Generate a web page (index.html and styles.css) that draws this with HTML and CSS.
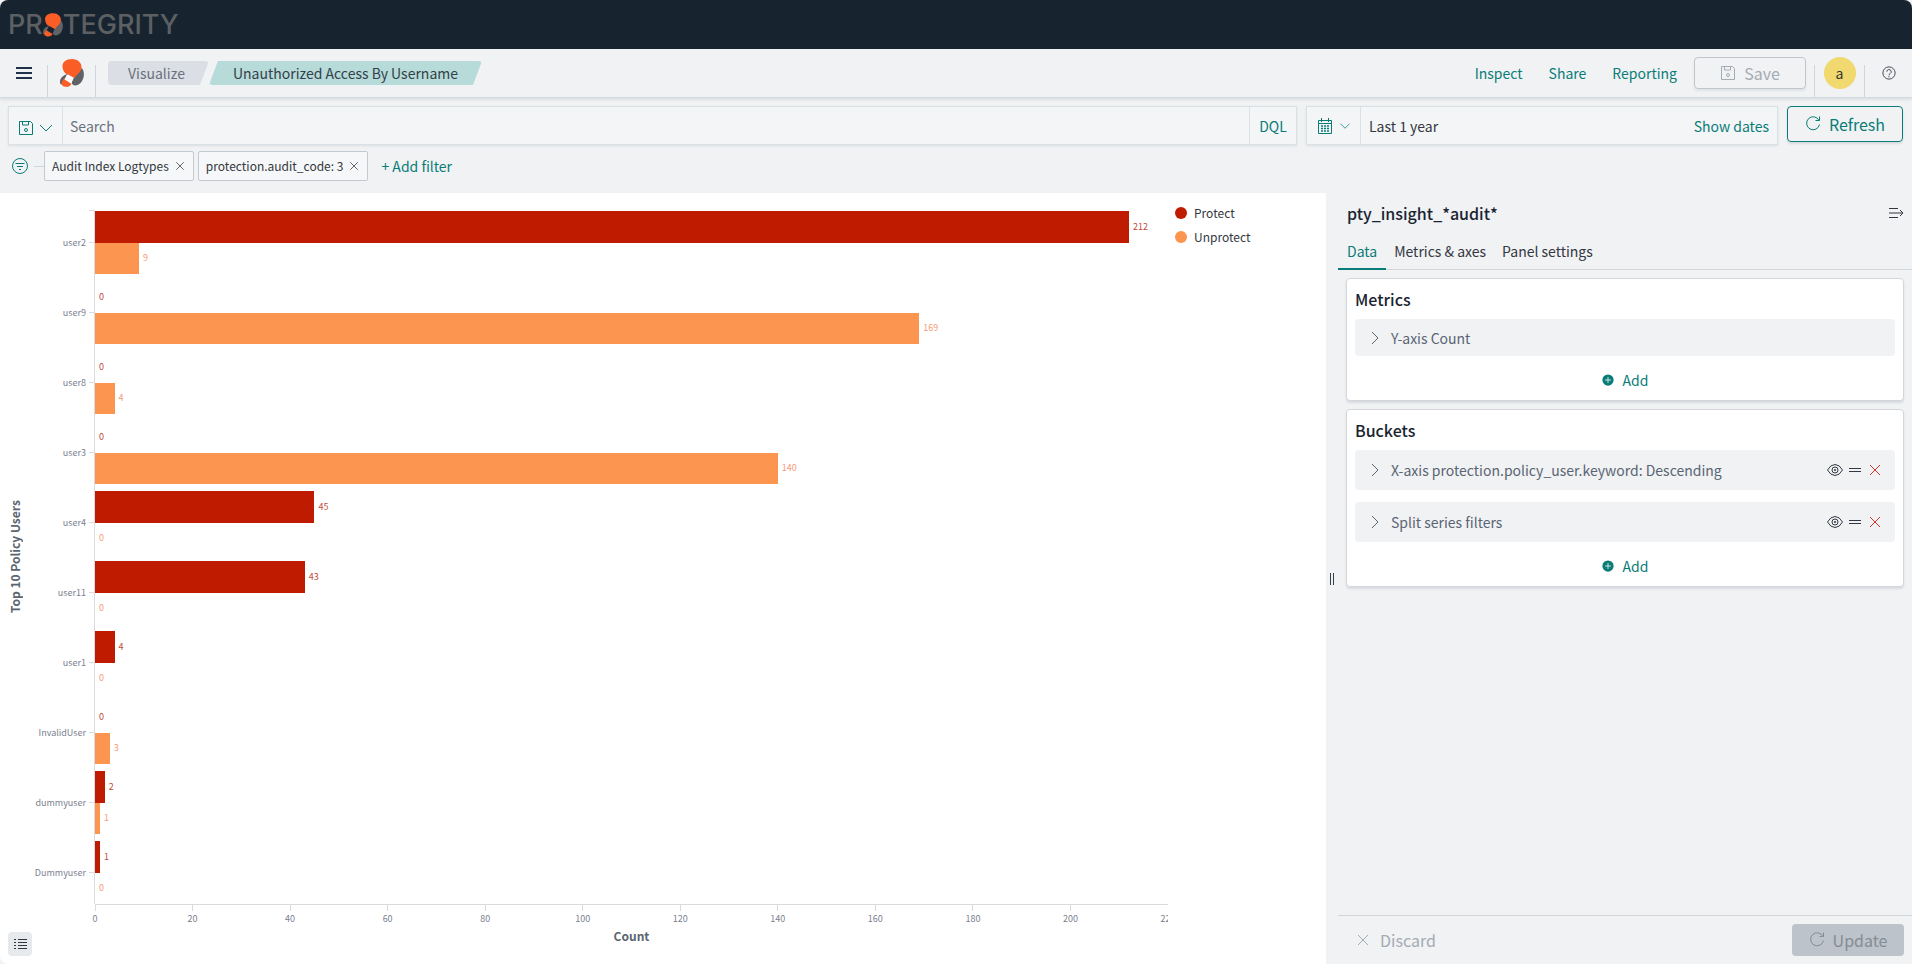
FILE: index.html
```html
<!DOCTYPE html>
<html lang="en">
  <head>
    <meta charset="UTF-8" />
    <meta name="viewport" content="width=device-width, initial-scale=1.0" />
    <title>Unauthorized Access By Username</title>
    <link rel="stylesheet" href="styles.css">
  </head>
  <body>
    <!-- shared icons -->
    <svg class="sprite" aria-hidden="true">
      <symbol id="i-mark" viewBox="0 0 24 28">
        <path class="mark-dark" d="M21.500 9C24.500 11 25 19 21 23.500 18 27 13 27.500 12 24.500 11.500 21 15 17 18 14 20 12 21 11 21.500 9z" />
        <path class="mark-dark" d="M8 15C3 16 0 19 0 23c0 2 1 3 2 2C3 21 6 20 8 15z" />
        <path class="mark-hot" d="M2.500 8C2 3 6 0 12 0s10 4 9.500 9c-.5 4-4.500 6-7 10L8 15.500C5 15 3 12 2.500 8z" />
        <path class="mark-hot" d="M5 19C2 21 -.5 26 4 27.500c3 1 7 0 7.500-3.500z" />
        <path class="mark-gap" d="M7 15.500l6.500 4-2.500 5-6.500-4z" />
      </symbol>
      <symbol id="i-save" viewBox="0 0 16 16">
        <path d="M1.500 1.500h11l2 2v11h-13zM4.500 1.500v3.500h6v-3.500" />
        <circle cx="8" cy="10" r="1.500" />
      </symbol>
      <symbol id="i-down" viewBox="0 0 16 16"><path d="M2 5l6 6 6-6" /></symbol>
      <symbol id="i-right" viewBox="0 0 16 16"><path d="M5 2l6 6-6 6" /></symbol>
      <symbol id="i-x" viewBox="0 0 16 16"><path d="M3 3l10 10M13 3L3 13" /></symbol>
      <symbol id="i-refresh" viewBox="0 0 16 16"><path d="M10.500 4.500h4v-4M14 4.500A6.500 6.500 0 1 0 14.500 8.500" /></symbol>
      <symbol id="i-calendar" viewBox="0 0 16 16">
        <path d="M1.500 2.500h13v13h-13zM1.500 5.500h13M4.500 0v4M11.500 0v4" />
        <path stroke-dasharray="2 1" stroke-width="1.500" d="M4 8h8M4 10.500h8M4 13h8" />
      </symbol>
      <symbol id="i-filter" viewBox="0 0 16 16"><circle cx="8" cy="8" r="7.500" /><path d="M3.500 5.500h9M5 8.500h6M7 11.500h2" /></symbol>
      <symbol id="i-help" viewBox="0 0 16 16"><circle cx="8" cy="8" r="7" /><path d="M5.500 6.500a2.500 2.500 0 1 1 3.700 2.200Q8 9.200 8 10.500M8 11.500v1.500" /></symbol>
      <symbol id="i-plus" viewBox="0 0 16 16"><circle cx="8" cy="8" r="7.500" fill="currentColor" stroke="none" /><path stroke="#fff" d="M8 4v8M4 8h8" /></symbol>
      <symbol id="i-eye" viewBox="0 0 16 16"><path d="M.5 8Q3.500 2.500 8 2.500t7.500 5.500Q12.500 13.500 8 13.500T.5 8z" /><circle cx="8" cy="8" r="3" /><circle cx="8" cy="8" r=".7" /></symbol>
      <symbol id="i-grab" viewBox="0 0 12 12"><path d="M0 4.500h12M0 7.500h12" /></symbol>
      <symbol id="i-collapse" viewBox="0 0 16 16"><path d="M1 3.500h9M1 8h14M1 12.500h9M12 5l3 3-3 3" /></symbol>
      <symbol id="i-list" viewBox="0 0 14 12"><path d="M1 1.500h2M5 1.500h9M1 4.500h2M5 4.500h9M1 7.500h2M5 7.500h9M1 10.500h2M5 10.500h9" /></symbol>
    </svg>

    <header class="brand">
      <a href="#" class="wordmark" aria-label="Protegrity">
        <span>PR</span><svg class="brand-mark"><use href="#i-mark" /></svg><span>TEGRITY</span>
      </a>
    </header>

    <nav class="topnav">
      <button class="hamburger" aria-label="Menu"><i></i><i></i><i></i></button>
      <a href="#" class="home" aria-label="Home"><svg><use href="#i-mark" /></svg></a>
      <div class="crumbs">
        <a href="#" class="crumb">Visualize</a>
        <a href="#" class="crumb crumb-active">Unauthorized Access By Username</a>
      </div>
      <div class="nav-links">
        <a href="#">Inspect</a>
        <a href="#">Share</a>
        <a href="#">Reporting</a>
      </div>
      <button class="btn btn-save" disabled><svg class="icon"><use href="#i-save" /></svg>Save</button>
      <div class="nav-cell avatar-cell"><button class="avatar">a</button></div>
      <div class="nav-cell help-cell"><button class="plain" aria-label="Help"><svg class="icon-help"><use href="#i-help" /></svg></button></div>
    </nav>

    <section class="query">
      <div class="query-row">
        <div class="field search-field">
          <button class="field-btn saved" aria-label="Saved queries">
            <svg class="icon"><use href="#i-save" /></svg>
            <svg class="icon"><use href="#i-down" /></svg>
          </button>
          <input type="text" placeholder="Search" aria-label="Search">
          <button class="field-btn dql">DQL</button>
        </div>
        <div class="field date-field">
          <button class="field-btn when" aria-label="Date quick select">
            <svg class="icon"><use href="#i-calendar" /></svg>
            <svg class="icon-sm"><use href="#i-down" /></svg>
          </button>
          <button class="range">Last 1 year</button>
          <button class="show-dates">Show dates</button>
        </div>
        <button class="btn btn-refresh"><svg class="icon"><use href="#i-refresh" /></svg>Refresh</button>
      </div>
      <div class="filters">
        <button class="plain teal" aria-label="Filter options"><svg class="icon"><use href="#i-filter" /></svg></button>
        <span class="dash"></span>
        <span class="pill">Audit Index Logtypes<button class="plain" aria-label="Remove filter"><svg class="icon-sm"><use href="#i-x" /></svg></button></span>
        <span class="pill">protection.audit_code: 3<button class="plain" aria-label="Remove filter"><svg class="icon-sm"><use href="#i-x" /></svg></button></span>
        <button class="plain add-filter">+ Add filter</button>
      </div>
    </section>

    <main class="workspace">
      <section class="vis">
        <div class="y-title">Top 10 Policy Users</div>
        <div class="chart">
          <div class="rows" id="rows"></div>
          <div class="x-axis" id="x-axis"></div>
          <div class="x-title">Count</div>
        </div>
        <ul class="legend">
          <li><i class="protect"></i>Protect</li>
          <li><i class="unprotect"></i>Unprotect</li>
        </ul>
        <button class="legend-toggle" aria-label="Toggle legend"><svg><use href="#i-list" /></svg></button>
      </section>

      <div class="resizer"><i></i><i></i></div>

      <aside class="editor">
        <div class="editor-head">
          <h2>pty_insight_*audit*</h2>
          <button class="plain" aria-label="Collapse"><svg class="icon"><use href="#i-collapse" /></svg></button>
        </div>
        <div class="tabs">
          <button class="tab tab-active">Data</button>
          <button class="tab">Metrics &amp; axes</button>
          <button class="tab">Panel settings</button>
        </div>
        <div class="cards">
          <section class="card">
            <h3>Metrics</h3>
            <div class="agg agg-single">
              <button class="agg-name"><svg class="icon"><use href="#i-right" /></svg>Y-axis Count</button>
            </div>
            <button class="add"><svg class="icon-sm"><use href="#i-plus" /></svg>Add</button>
          </section>
          <section class="card">
            <h3>Buckets</h3>
            <div class="agg">
              <button class="agg-name"><svg class="icon"><use href="#i-right" /></svg>X-axis protection.policy_user.keyword: Descending</button>
              <button class="plain" aria-label="Disable"><svg class="icon"><use href="#i-eye" /></svg></button>
              <button class="plain" aria-label="Reorder"><svg class="icon-sm"><use href="#i-grab" /></svg></button>
              <button class="plain danger" aria-label="Remove"><svg class="icon"><use href="#i-x" /></svg></button>
            </div>
            <div class="agg">
              <button class="agg-name"><svg class="icon"><use href="#i-right" /></svg>Split series filters</button>
              <button class="plain" aria-label="Disable"><svg class="icon"><use href="#i-eye" /></svg></button>
              <button class="plain" aria-label="Reorder"><svg class="icon-sm"><use href="#i-grab" /></svg></button>
              <button class="plain danger" aria-label="Remove"><svg class="icon"><use href="#i-x" /></svg></button>
            </div>
            <button class="add"><svg class="icon-sm"><use href="#i-plus" /></svg>Add</button>
          </section>
        </div>
        <footer class="editor-foot">
          <button class="discard" disabled><svg class="icon"><use href="#i-x" /></svg>Discard</button>
          <button class="btn btn-update" disabled><svg class="icon"><use href="#i-refresh" /></svg>Update</button>
        </footer>
      </aside>
    </main>

    <script>
      const MAX = 220;
      const data = [
        ["user2", 212, 9],
        ["user9", 0, 169],
        ["user8", 0, 4],
        ["user3", 0, 140],
        ["user4", 45, 0],
        ["user11", 43, 0],
        ["user1", 4, 0],
        ["InvalidUser", 0, 3],
        ["dummyuser", 2, 1],
        ["Dummyuser", 1, 0],
      ];

      function bar(name, value) {
        const width = (value / MAX) * 100;
        return `<div class="bar-line ${name}-line"><div class="bar ${name}" style="width: ${width}%"></div><span>${value}</span></div>`;
      }

      document.getElementById("rows").innerHTML = data
        .map(
          ([user, protect, unprotect]) =>
            `<div class="row"><div class="row-label">${user}</div><div class="bars">${bar("protect", protect)}${bar("unprotect", unprotect)}</div></div>`
        )
        .join("");

      let ticks = "";
      for (let n = 0; n <= MAX; n += 20) {
        ticks += `<span class="x-tick" style="left: ${(n / MAX) * 100}%">${n}</span>`;
      }
      document.getElementById("x-axis").innerHTML = ticks;
    </script>
  </body>
</html>
```
FILE: styles.css
```css
* {
  box-sizing: border-box;
}

body {
  margin: 0;
  min-height: 100vh;
  display: flex;
  flex-direction: column;
  background: #f0f2f4;
  color: #343741;
  font-family: "Noto Sans CJK SC", "Noto Sans", sans-serif;
  font-size: 14px;
  line-height: 24px;
}

button,
input {
  font: inherit;
  color: inherit;
  background: none;
  border: 0;
  padding: 0;
  margin: 0;
}

button {
  display: inline-flex;
  align-items: center;
  white-space: nowrap;
}

a {
  color: #0a7c78;
  text-decoration: none;
}

h2,
h3 {
  margin: 0;
  font-size: 16px;
  font-weight: 500;
  color: #1a2430;
}

svg {
  display: block;
  flex: none;
  fill: none;
  stroke: currentColor;
}

.sprite {
  position: absolute;
  width: 0;
  height: 0;
}

#i-mark {
  stroke: none;
}

.mark-hot {
  fill: #fa5d26;
}

.mark-dark {
  fill: #5f6266;
}

.mark-gap {
  fill: var(--gap, #fff);
}

.icon {
  width: 16px;
  height: 16px;
}

.icon-sm {
  width: 12px;
  height: 12px;
}

.icon-help {
  width: 14px;
  height: 14px;
}

.teal {
  color: #0a7c78;
}

/* brand bar */
.brand {
  height: 49px;
  background: #172430;
  border-radius: 8px 8px 0 0;
  padding: 0 8px;
  display: flex;
  align-items: center;
}

.wordmark {
  display: flex;
  align-items: center;
  color: #5d6063;
  font-family: Inter, sans-serif;
  font-size: 27px;
  font-weight: 500;
}

.brand-mark {
  width: 20px;
  height: 24px;
  --gap: #172430;
}

/* navigation */
.topnav {
  height: 49px;
  display: flex;
  align-items: center;
  border-bottom: 1px solid #d3dae6;
  box-shadow: 0 2px 2px rgba(90, 100, 110, 0.12);
}

.hamburger {
  flex-direction: column;
  justify-content: space-between;
  width: 16px;
  height: 12px;
  margin: 0 15px 0 16px;
}

.hamburger i {
  width: 16px;
  height: 2px;
  background: #1f3247;
}

.home {
  align-self: flex-end;
  height: 32px;
  width: 49px;
  display: flex;
  justify-content: center;
  border: solid #cfd5dc;
  border-width: 0 1px;
}

.home svg {
  width: 24px;
  height: 28px;
  margin-top: -6px;
}

.crumbs {
  display: flex;
  margin-left: 12px;
  flex: 1;
}

.crumb {
  height: 24px;
  padding: 0 24px 0 20px;
  color: #69707d;
  background: #dbdee4;
  border-radius: 4px;
  clip-path: polygon(0 0, 100% 0, calc(100% - 9px) 100%, 0 100%);
}

.crumb-active {
  padding: 0 24px;
  color: #343f49;
  background: #b6dbd9;
  clip-path: polygon(9px 0, 100% 0, calc(100% - 9px) 100%, 0 100%);
}

.nav-links {
  display: flex;
  gap: 26px;
  margin-right: 17px;
}

.btn {
  height: 32px;
  justify-content: center;
  gap: 8px;
  font-size: 16px;
  border-radius: 4px;
}

.btn-save {
  width: 112px;
  color: #a5abb3;
  border: 1px solid #c0c5cc;
  box-shadow: 0 2px 2px rgba(90, 100, 110, 0.1);
}

.nav-cell {
  height: 32px;
  align-self: flex-end;
  display: flex;
  justify-content: center;
  border-left: 1px solid #cfd5dc;
}

.avatar-cell {
  width: 50px;
  margin-left: 8px;
}

.help-cell {
  width: 48px;
}

.avatar {
  width: 32px;
  height: 32px;
  margin-top: -8px;
  justify-content: center;
  border-radius: 50%;
  background: #f1d86f;
  color: #333;
}

.help-cell .plain {
  height: 16px;
}

/* query bar */
.query {
  padding: 8px 8px 12px;
}

.query-row {
  display: flex;
  align-items: flex-start;
  gap: 9px;
}

.field {
  height: 39px;
  display: flex;
  align-items: center;
  background: #f3f5f6;
  border: 1px solid #d9e1e4;
  box-shadow: 0 1px 2px rgba(90, 100, 110, 0.12);
}

.search-field {
  flex: 1;
}

.search-field input {
  flex: 1;
  padding: 0 7px;
  outline: 0;
}

.search-field input::placeholder {
  color: #69707d;
}

.field-btn {
  height: 100%;
  color: #0a7c78;
  justify-content: center;
}

.saved {
  width: 54px;
  gap: 4px;
  padding-top: 4px;
  border-right: 1px solid #d9e1e4;
}

.dql {
  width: 47px;
  border-left: 1px solid #d9e1e4;
}

.date-field {
  flex: 0 0 472px;
}

.when {
  width: 54px;
  gap: 6px;
  border-right: 1px solid #d9e1e4;
}

.range {
  flex: 1;
  padding-left: 8px;
}

.show-dates {
  color: #0a7c78;
  padding-right: 8px;
}

.btn-refresh {
  width: 116px;
  height: 36px;
  margin-right: 1px;
  color: #0a7c78;
  border: 1px solid #0a7c78;
  box-shadow: 0 2px 2px rgba(90, 100, 110, 0.15);
}

.filters {
  display: flex;
  align-items: center;
  padding: 6px 4px 0;
}

.dash {
  width: 10px;
  height: 1px;
  margin-left: 6px;
  background: #cfd5dc;
}

.pill {
  height: 30px;
  display: flex;
  align-items: center;
  gap: 5px;
  margin-right: 4px;
  padding: 0 7px;
  font-size: 12px;
  border: 1px solid #c4c9cf;
  border-radius: 2px;
  background: #f5f7f8;
}

.add-filter {
  margin-left: 9px;
  color: #0a7c78;
}

/* workspace */
.workspace {
  flex: 1;
  display: flex;
}

.vis {
  flex: 1;
  position: relative;
  display: flex;
  padding: 8px 0 22px;
  background: #fff;
  border-radius: 0 0 0 8px;
  font-size: 9px;
  line-height: 12px;
}

.y-title {
  width: 30px;
  margin: 9px 0 39px;
  writing-mode: vertical-rl;
  transform: rotate(180deg);
  text-align: center;
  line-height: 30px;
  font-size: 12px;
  font-weight: 700;
  color: #5a6570;
}

.chart {
  flex: 1;
  display: flex;
  flex-direction: column;
  padding-top: 9px;
}

/* axis line and its top tick sit behind the rows */
.rows {
  flex: 1;
  display: flex;
  flex-direction: column;
  gap: 7px;
  padding: 1px 0 0;
  background:
    linear-gradient(#d9dbdf, #d9dbdf) 59px 0 / 6px 1px no-repeat,
    linear-gradient(#d9dbdf, #d9dbdf) 64px 0 / 1px 100% no-repeat;
}

.row {
  flex: 1;
  display: flex;
}

.row-label {
  width: 65px;
  display: flex;
  align-items: center;
  justify-content: flex-end;
  gap: 3px;
  color: #7a8190;
}

.row-label::after {
  content: "";
  width: 6px;
  height: 1px;
  background: #d9dbdf;
}

.bars {
  flex: 1;
  display: flex;
  flex-direction: column;
}

.bar-line {
  flex: 1;
  display: flex;
  align-items: center;
  gap: 4px;
}

.bar {
  height: 100%;
}

.protect {
  background: #bf1b00;
}

.unprotect {
  background: #fb9550;
}

.protect-line {
  color: #bf4a3a;
}

.unprotect-line {
  color: #f79b78;
}

/* the last label is clipped at the right end of the axis */
.x-axis {
  position: relative;
  height: 26px;
  margin-left: 65px;
  border-top: 1px solid #d9dbdf;
  clip-path: inset(0 0 0 -16px);
}

.x-tick {
  position: absolute;
  top: 0;
  width: 30px;
  margin-left: -15px;
  padding-top: 8px;
  text-align: center;
  color: #7a8190;
  background: linear-gradient(#d9dbdf, #d9dbdf) 50% 0 / 1px 6px no-repeat;
}

.x-title {
  margin-left: 65px;
  text-align: center;
  font-size: 12px;
  font-weight: 700;
  color: #5a6570;
}

.legend {
  width: 158px;
  margin: 0;
  padding: 0 0 0 7px;
  list-style: none;
  font-size: 12px;
  line-height: 24px;
}

.legend li {
  display: flex;
  align-items: center;
  gap: 7px;
}

.legend i {
  width: 12px;
  height: 12px;
  border-radius: 50%;
}

.legend-toggle {
  position: absolute;
  left: 8px;
  bottom: 8px;
  width: 24px;
  height: 24px;
  justify-content: center;
  border-radius: 4px;
  background: #e6eaed;
}

.legend-toggle svg {
  width: 14px;
  height: 12px;
}

.resizer {
  width: 12px;
  display: flex;
  align-items: center;
  justify-content: center;
  gap: 2px;
}

.resizer i {
  width: 1px;
  height: 12px;
  background: #343f4d;
}

/* editor panel */
.editor {
  width: 574px;
  display: flex;
  flex-direction: column;
}

.editor-head {
  display: flex;
  align-items: center;
  justify-content: space-between;
  padding: 8px 8px 8px 9px;
}

.tabs {
  display: flex;
  border-bottom: 1px solid #d3d7dc;
}

.tab {
  height: 37px;
  padding: 0 8px;
  margin-bottom: -1px;
  border-bottom: 2px solid transparent;
}

.tab-active {
  padding: 0 9px;
  color: #0a7c78;
  border-color: #0a7c78;
}

.cards {
  flex: 1;
  display: flex;
  flex-direction: column;
  gap: 8px;
  padding: 8px;
}

.card {
  padding: 8px;
  background: #fff;
  border: 1px solid #d3d7dc;
  border-radius: 4px;
  box-shadow: 0 2px 2px rgba(90, 100, 110, 0.15);
}

.card h3 {
  margin-bottom: 8px;
}

.agg {
  height: 40px;
  display: flex;
  align-items: center;
  gap: 6px;
  margin-bottom: 12px;
  padding: 0 12px;
  background: #f0f2f4;
  border-radius: 4px;
}

.agg-single {
  height: 37px;
}

.agg-name {
  flex: 1;
  gap: 8px;
  color: #5a6573;
}

.danger {
  color: #d0342c;
}

.add {
  display: flex;
  gap: 9px;
  margin: 0 auto;
  color: #0a7c78;
}

.editor-foot {
  display: flex;
  align-items: center;
  justify-content: space-between;
  height: 49px;
  padding: 0 8px 0 17px;
  border-top: 1px solid #d3d7dc;
}

.discard {
  gap: 9px;
  font-size: 16px;
  color: #a5abb3;
}

.btn-update {
  width: 112px;
  color: #848c95;
  background: #bcc3ca;
}
```
